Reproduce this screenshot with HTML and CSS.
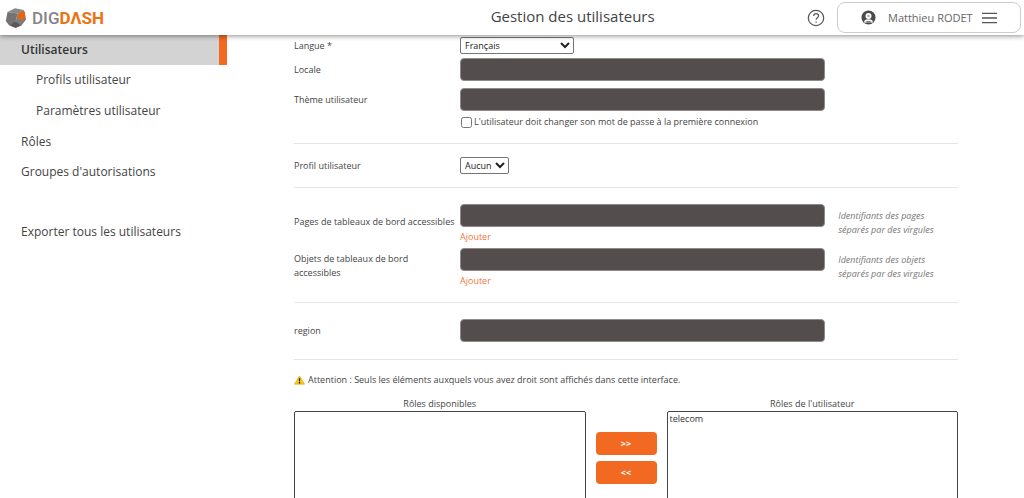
FILE: index.html
```html
<!DOCTYPE html>
<html lang="fr">
<head>
<meta charset="utf-8">
<meta name="viewport" content="width=device-width, initial-scale=1">
<title>Gestion des utilisateurs</title>
<link rel="stylesheet" href="styles.css">
</head>
<body>
<header class="topbar">
  <a class="logo" href="#" aria-label="DigDash">
    <svg class="logo-mark" viewBox="0 0 22 22" aria-hidden="true">
      <path fill="#8b8989" d="M2.500 5 10 1.200 19 3 12.500 6.500z"/>
      <path fill="#757272" d="M2.500 5 12.500 6.500 10.500 15.500 4 18.300 0.800 14z"/>
      <path fill="#7f7c7c" d="M12.500 6.500 19 3 21 12.500 16.500 18.500 10.500 15.500z"/>
      <path fill="#5b5757" d="M4 18.300 10.500 14.500 16.500 18.500 10.500 21z"/>
      <path fill="#e8650f" d="M13 7 16 4.500 19.800 4.800 20.300 9.500 17 13.300 13 12z"/>
    </svg>
    <span class="logo-text">DIG<span class="logo-accent">DΛSH</span></span>
  </a>
  <h1 class="title">Gestion des utilisateurs</h1>
  <div class="tools">
    <button class="help" type="button" aria-label="Aide">
      <svg viewBox="0 0 18 18" aria-hidden="true"><circle cx="9" cy="9" r="7.700"/><path d="M6.600 7.100c0-1.600 1-2.500 2.500-2.500s2.500 1 2.500 2.200c0 1.900-2.500 2-2.500 4"/><path d="M9.100 12.400v1.300"/></svg>
    </button>
    <button class="account" type="button">
      <svg class="avatar" viewBox="0 0 16 16" aria-hidden="true"><circle cx="8" cy="8" r="7.500" fill="#4a4a4a"/><circle cx="8" cy="6.500" r="3.200" fill="#fff"/><path fill="#fff" d="M3.600 13.600V12c0-1.400 1.800-2.200 4.400-2.200s4.400.8 4.400 2.200v1.600z"/><circle cx="8" cy="6.300" r="1.300" fill="#aaa"/><path fill="#777" d="M4.800 13.500c0-1.200 1.200-1.700 3.200-1.700s3.200.5 3.200 1.700z"/></svg>
      <span>Matthieu RODET</span>
      <svg class="burger" viewBox="0 0 16 12" aria-hidden="true"><path d="M0 1h16M0 6h16M0 11h16"/></svg>
    </button>
  </div>
</header>
<div class="layout">
  <nav class="sidebar">
    <a class="nav-item active" href="#">Utilisateurs</a>
    <a class="nav-item sub" href="#">Profils utilisateur</a>
    <a class="nav-item sub" href="#">Paramètres utilisateur</a>
    <a class="nav-item" href="#">Rôles</a>
    <a class="nav-item" href="#">Groupes d'autorisations</a>
    <a class="nav-item export" href="#">Exporter tous les utilisateurs</a>
  </nav>
  <main class="content">
    <form>
      <section class="group first">
        <div class="row">
          <label for="langue">Langue *</label>
          <div><select class="select wide" id="langue"><option>Français</option></select></div>
        </div>
        <div class="row">
          <label for="locale">Locale</label>
          <input class="field" id="locale" type="text">
        </div>
        <div class="row spaced">
          <label for="theme">Thème utilisateur</label>
          <input class="field" id="theme" type="text">
        </div>
        <div class="row">
          <div class="check"><input id="pwd" type="checkbox"><label for="pwd">L'utilisateur doit changer son mot de passe à la première connexion</label></div>
        </div>
      </section>
      <section class="group profile">
        <div class="row">
          <label for="profil">Profil utilisateur</label>
          <div><select class="select" id="profil"><option>Aucun</option></select></div>
        </div>
      </section>
      <section class="group access">
        <div class="row">
          <label class="caption" for="pages">Pages de tableaux de bord accessibles</label>
          <div class="stack"><input class="field" id="pages" type="text"><a class="add" href="#">Ajouter</a></div>
          <p class="hint">Identifiants des pages séparés par des virgules</p>
        </div>
        <div class="row">
          <label class="caption" for="objets">Objets de tableaux de bord accessibles</label>
          <div class="stack"><input class="field" id="objets" type="text"><a class="add" href="#">Ajouter</a></div>
          <p class="hint">Identifiants des objets séparés par des virgules</p>
        </div>
      </section>
      <section class="group">
        <div class="row">
          <label for="region">region</label>
          <input class="field" id="region" type="text">
        </div>
      </section>
      <section class="group roles">
        <p class="warning">
          <svg viewBox="0 0 12 10" aria-hidden="true"><path fill="#f9c51c" stroke="#e3ac10" stroke-width=".8" stroke-linejoin="round" d="M6 .6 11.500 9.500H.5z"/><path fill="#222" d="M5.200 3h1.600l-.3 3.600h-1zM5.300 7.300h1.400v1.400H5.300z"/></svg>
          <span>Attention : Seuls les éléments auxquels vous avez droit sont affichés dans cette interface.</span>
        </p>
        <div class="transfer">
          <div class="list">
            <label for="dispo">Rôles disponibles</label>
            <select id="dispo" multiple></select>
          </div>
          <div class="moves">
            <button type="button">&gt;&gt;</button>
            <button type="button">&lt;&lt;</button>
          </div>
          <div class="list">
            <label for="roles">Rôles de l'utilisateur</label>
            <select id="roles" multiple><option>telecom</option></select>
          </div>
        </div>
      </section>
    </form>
  </main>
</div>
</body>
</html>
```
FILE: styles.css
```css
* { box-sizing: border-box; }

body {
  margin: 0;
  height: 100vh;
  display: flex;
  flex-direction: column;
  overflow: hidden;
  background: #fff;
  color: #444;
  font: 9px/14px "Open Sans", sans-serif;
}

button, input, select { font: inherit; color: inherit; }
a { text-decoration: none; }

.topbar {
  display: grid;
  grid-template-columns: 57fr auto 43fr;
  align-items: center;
  flex: none;
  height: 35px;
  padding: 0 3px 0 5px;
  background: #fff;
  box-shadow: 0 1px 5px rgba(0, 0, 0, .45);
  z-index: 1;
}
.logo { display: flex; align-items: center; gap: 5px; }
.logo-mark { width: 22px; height: 22px; }
.logo-text { font: 500 17px/20px Roboto, sans-serif; color: #858585; }
.logo-accent { color: #ee7212; font-weight: 700; }
.title { margin: 0; font-size: 15px; line-height: 20px; padding-bottom: 3px; font-weight: 400; }
.tools { display: flex; justify-content: flex-end; align-items: center; gap: 12px; }
.help { width: 18px; height: 18px; padding: 0; border: 0; background: none; }
.help svg { display: block; fill: none; stroke: #555; stroke-width: 1.2; }
.account {
  display: flex;
  align-items: center;
  height: 31px;
  width: 184px;
  padding: 0 23px;
  border: 1px solid #ccc;
  border-radius: 8px;
  background: #fff;
  font-size: 11px;
  color: #666;
  white-space: nowrap;
}
.avatar { width: 15px; height: 15px; margin-right: 12px; flex: none; }
.burger { width: 15px; height: 12px; margin-left: 9px; flex: none; stroke: #555; stroke-width: 1.4; }

.layout { display: flex; flex: 1; min-height: 0; }
.sidebar { display: flex; flex-direction: column; flex: none; width: 227px; }
.nav-item {
  padding: 5px 21px;
  font-size: 12px;
  line-height: 20px;
  color: #444;
}
.nav-item.sub { padding-left: 36px; margin-bottom: 1px; }
.nav-item.active {
  background: #d3d3d3;
  border-right: 8px solid #f26a21;
  color: #333;
  font-weight: 600;
}
.nav-item.export { margin-top: 30px; }

.content { flex: 1; padding: 0 66px 0 67px; overflow: hidden; }
.group { padding: 16px 0 17px; border-bottom: 1px solid #e6e6e6; display: grid; }
.group.first { padding: 2px 0 14px; gap: 4px; }
.group.profile { padding: 13px 0; }
.group.access { padding-bottom: 10px; }
.group.roles { padding-top: 13px; gap: 10px; border: 0; }
.row { display: grid; grid-template-columns: 25% 55% 20%; align-items: center; }
.row.spaced { padding-top: 3px; }
.field {
  width: 100%;
  height: 23px;
  padding: 0 6px;
  border: 1px solid #8f8a8a;
  border-radius: 4px;
  background: #534d4d;
  color: #fff;
}
.select {
  display: block;
  height: 17px;
  padding: 0;
  border: 1px solid #767676;
  border-radius: 2px;
  background: #fff;
  color: #222;
}
.select.wide { width: 114px; }
.check { grid-column: 2 / 4; display: flex; align-items: center; gap: 2px; }
.check input { width: 11px; height: 11px; margin: 0 0 0 1px; }
.caption { padding: 0 4px 8px 0; }
.stack { display: flex; flex-direction: column; align-items: flex-start; padding-bottom: 4px; }
.add { margin-top: 3px; color: #ef7440; }
.hint { margin: 0; padding: 0 12px 6px 13px; font-style: italic; color: #777; }

.warning { display: flex; align-items: center; gap: 3px; margin: 0; }
.warning svg { width: 11px; height: 10px; }
.transfer { display: grid; grid-template-columns: 1fr 61px 1fr; column-gap: 10px; }
.list { display: flex; flex-direction: column; text-align: center; }
.list select {
  width: 100%;
  height: 150px;
  padding: 0;
  border: 1px solid #444;
  border-radius: 2px;
  background: #fff;
  color: #333;
  text-align: left;
}
.moves { display: flex; flex-direction: column; gap: 6px; padding-top: 35px; }
.moves button {
  height: 23px;
  padding: 0;
  border: 0;
  border-radius: 4px;
  background: #f26a21;
  color: #fff;
  font-weight: 700;
}
```
